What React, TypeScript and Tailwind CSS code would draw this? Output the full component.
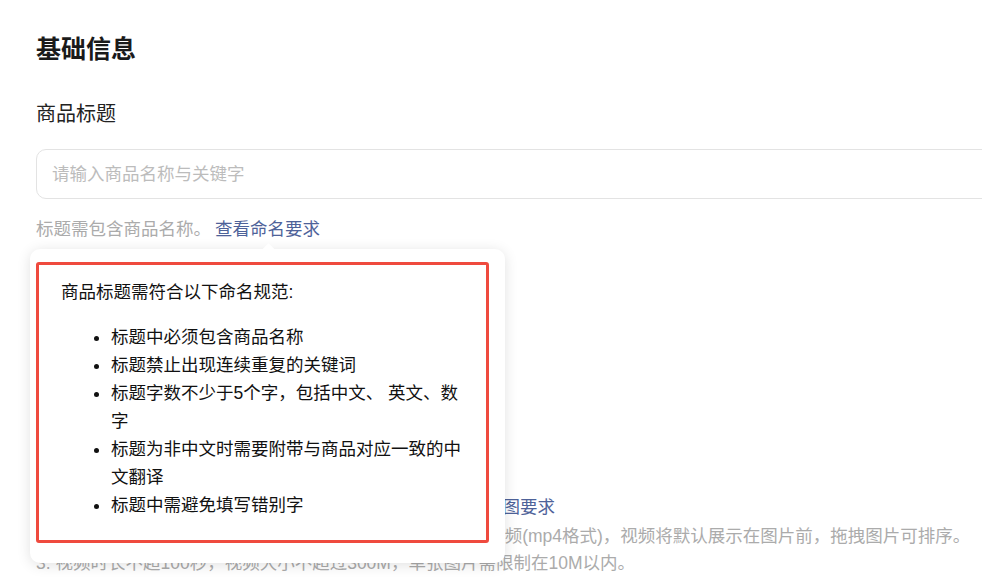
import React from 'react';

const rules = [
    '标题中必须包含商品名称',
    '标题禁止出现连续重复的关键词',
    '标题字数不少于5个字，包括中文、 英文、数字',
    '标题为非中文时需要附带与商品对应一致的中文翻译',
    '标题中需避免填写错别字',
];

export default function App() {
    return (
        <main className="w-[982px] h-[581px] overflow-hidden bg-white pl-[36px] pt-[32px] text-[#1a1a1a] font-['Liberation_Sans','Noto_Sans_CJK_SC',sans-serif]">
            <h1 className="text-[25px] leading-[35px] font-bold">基础信息</h1>

            <label className="block mt-[33px] text-[20px] leading-[28px] text-[#222]" htmlFor="title">
                商品标题
            </label>
            <input
                id="title"
                type="text"
                placeholder="请输入商品名称与关键字"
                className="block mt-[21px] w-[1000px] h-[50px] border border-[#e3e3e3] rounded-[10px] px-[15px] text-[17.5px] outline-none placeholder:text-[#bcbcbc]"
            />

            <div className="relative mt-[16px] flex items-center text-[17.5px] leading-[28px]">
                <span className="text-[#ababab]">标题需包含商品名称。</span>
                <a className="ml-[4px] text-[#4e6299] cursor-pointer">查看命名要求</a>

                {/* popover */}
                <div className="absolute left-[-6px] top-[34px] z-10 w-[475px] h-[314px] bg-white rounded-[10px] shadow-[0_2px_14px_rgba(0,0,0,0.12)]">
                    <div className="absolute left-[234px] top-[-4px] w-[9px] h-[9px] bg-white rotate-45"></div>
                    <div className="relative ml-[6px] mt-[13px] w-[453px] h-[281px] border-[3px] border-[#ef4a3e] rounded-[3px] pt-[13px] pl-[22px] pr-[22px] text-[#111]">
                        <p className="text-[17.5px] leading-[28px]">商品标题需符合以下命名规范:</p>
                        <ul className="mt-[17px] list-disc pl-[50px] text-[17.5px] leading-[28px]">
                            {rules.map((r) => (
                                <li key={r}>{r}</li>
                            ))}
                        </ul>
                    </div>
                </div>
            </div>

            <div className="h-[250px] pt-[40px]">
                <div className="text-[20px] leading-[28px] text-[#222]">商品图片</div>
                <div className="mt-[16px] w-[110px] h-[110px] border border-dashed border-[#d9d9d9] rounded-[8px]"></div>
            </div>

            <div className="text-[17.5px] leading-[28px] text-[#ababab] whitespace-nowrap">
                <div className="flex">
                    <span className="inline-block w-[404px] overflow-hidden">1. 主图需为白底图，尺寸不小于800×800像素。</span>
                    <a className="ml-[10px] text-[#4e6299]">查看主图要求</a>
                </div>
                <div className="mt-[1px]">
                    2. 主图最多上传15张，首张图片将作为封面图，可上传1个视频(mp4格式)，视频将默认展示在图片前，拖拽图片可排序。
                </div>
                <div className="-mt-[1px]">
                    3. 视频时长不超100秒，视频大小不超过300M，单张图片需限制在10M以内。
                </div>
            </div>
        </main>
    );
}
